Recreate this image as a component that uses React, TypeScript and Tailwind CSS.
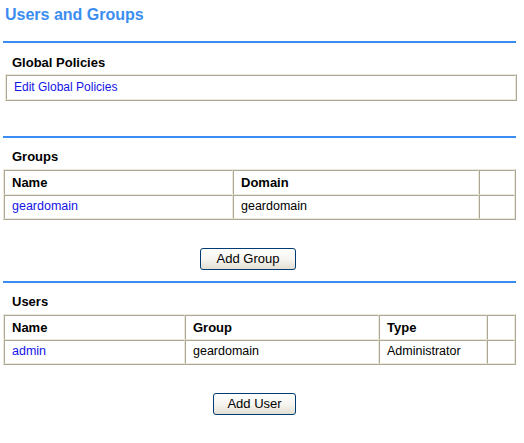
import React from "react";

const tableCls =
  "table-fixed border-separate border-spacing-0 border border-t-[#ece9d8] border-l-[#ece9d8] border-r-[#aca899] border-b-[#aca899]";
const cellCls =
  "border border-t-[#aca899] border-l-[#aca899] border-r-[#ece9d8] border-b-[#ece9d8] px-[7px] py-0 align-middle text-left";

const BlueRule = ({ mt }: { mt: string }) => (
  <div className={`${mt} ml-[3px] h-[2px] w-[513px] bg-[#3b8cf3]`} />
);

const SectionLabel = ({ children, mt }: { children: React.ReactNode; mt: string }) => (
  <div className={`${mt} h-[20px] pl-[12px] text-[13px] font-bold leading-[20px] text-black`}>
    {children}
  </div>
);

const XpButton = ({ label, width }: { label: string; width: string }) => (
  <button
    className={`${width} h-[22px] rounded-[3px] border border-[#003c74] bg-gradient-to-b from-white via-[#f6f5f0] to-[#e3e0d3] text-[13px] leading-[20px] text-black`}
  >
    {label}
  </button>
);

type Col = { title: string; width: string };

const DataTable = ({
  cols,
  row,
  mt,
}: {
  cols: Col[];
  row: { text: string; link?: boolean }[];
  mt: string;
}) => (
  <table className={`${tableCls} ${mt} ml-[3px] w-[513px]`}>
    <thead>
      <tr>
        {cols.map((c, i) => (
          <th key={i} className={`${cellCls} ${c.width} h-[25px] text-[13px] font-bold leading-[15px]`}>
            {c.title}
          </th>
        ))}
      </tr>
    </thead>
    <tbody>
      <tr>
        {row.map((cell, i) => (
          <td key={i} className={`${cellCls} h-[24px] pb-[2px] text-[12.5px] leading-[15px]`}>
            {cell.link ? (
              <a href="#" className="text-[#1414e6]">
                {cell.text}
              </a>
            ) : (
              <span className="text-black">{cell.text}</span>
            )}
          </td>
        ))}
      </tr>
    </tbody>
  </table>
);

export default function App() {
  return (
    <div className="h-[443px] w-[524px] bg-white font-['Liberation_Sans',Arial,sans-serif]">
      <h1 className="h-[30px] pl-[5px] text-[16px] font-bold leading-[30px] text-[#3b8ef0]">
        Users and Groups
      </h1>

      <BlueRule mt="mt-[11px]" />
      <SectionLabel mt="mt-[10px]">Global Policies</SectionLabel>
      <table className={`${tableCls} mt-[1px] ml-[5px] w-[512px]`}>
        <tbody>
          <tr>
            <td className={`${cellCls} h-[25px] pb-[1px] text-[12px] leading-[15px]`}>
              <a href="#" className="text-[#1414e6]">
                Edit Global Policies
              </a>
            </td>
          </tr>
        </tbody>
      </table>

      <BlueRule mt="mt-[35px]" />
      <SectionLabel mt="mt-[9px]">Groups</SectionLabel>
      <DataTable
        mt="mt-[2px]"
        cols={[
          { title: "Name", width: "w-[229px]" },
          { title: "Domain", width: "w-[246px]" },
          { title: "", width: "w-[36px]" },
        ]}
        row={[{ text: "geardomain", link: true }, { text: "geardomain" }, { text: "" }]}
      />
      <div className="mt-[28px] flex pl-[200px]">
        <XpButton label="Add Group" width="w-[96px]" />
      </div>

      <BlueRule mt="mt-[11px]" />
      <SectionLabel mt="mt-[9px]">Users</SectionLabel>
      <DataTable
        mt="mt-[2px]"
        cols={[
          { title: "Name", width: "w-[181px]" },
          { title: "Group", width: "w-[194px]" },
          { title: "Type", width: "w-[108px]" },
          { title: "", width: "w-[28px]" },
        ]}
        row={[
          { text: "admin", link: true },
          { text: "geardomain" },
          { text: "Administrator" },
          { text: "" },
        ]}
      />
      <div className="mt-[28px] flex pl-[213px]">
        <XpButton label="Add User" width="w-[83px]" />
      </div>
    </div>
  );
}
